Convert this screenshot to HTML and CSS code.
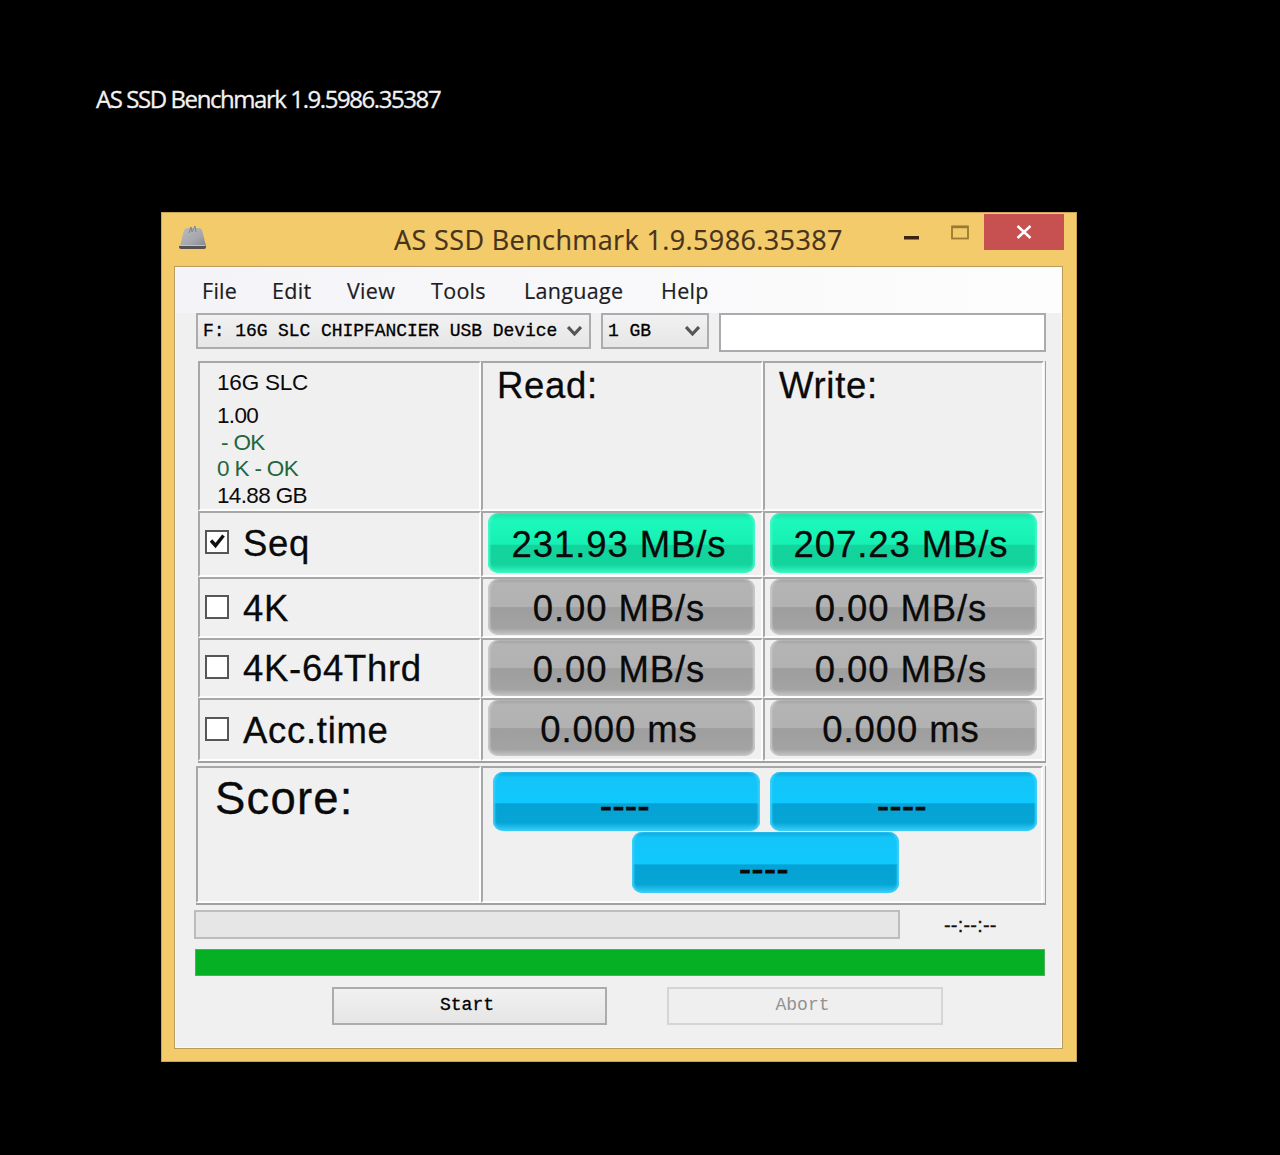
FILE: index.html
```html
<!DOCTYPE html>
<html lang="en">
<head>
<meta charset="utf-8">
<title>AS SSD Benchmark 1.9.5986.35387</title>
<link rel="stylesheet" href="styles.css">
</head>
<body>
<h1 class="caption">AS SSD Benchmark 1.9.5986.35387</h1>
<main class="window">
  <header class="titlebar">
    <svg class="app-icon" width="30" height="28" viewBox="0 0 30 28">
      <defs><linearGradient id="metal" x1="0" y1="0" x2="1" y2="1"><stop offset="0" stop-color="#b9bcc2"/><stop offset=".6" stop-color="#a6a7ad"/><stop offset="1" stop-color="#85868c"/></linearGradient></defs>
      <path d="M6 5Q7 3 10 3H20Q23 3 24 5L28 21H2Z" fill="url(#metal)"/>
      <path d="M1 21H28V22Q28 24 26 24H3Q1 24 1 22Z" fill="#55534f"/>
      <path d="M2 20.500H27" stroke="#c0c1c5" stroke-width="1"/>
      <path d="M11 8L13 2L14 7L17 1L18 7" fill="none" stroke="#85847f" stroke-width="1"/>
    </svg>
    <div class="window-title">AS SSD Benchmark 1.9.5986.35387</div>
    <div class="controls">
      <svg class="min" width="16" height="4"><rect width="15" height="3.500" fill="#3c2410"/></svg>
      <svg class="max" width="19" height="15" viewBox="0 0 19 15"><rect x="1" y="1.500" width="16" height="12" fill="none" stroke="#9b7a33" stroke-width="1.800"/><path d="M1 2H17" stroke="#9b7a33" stroke-width="2.500"/></svg>
      <div class="close"><svg width="16" height="14" viewBox="0 0 16 14"><path d="M1.500 1L14.500 13M14.500 1L1.500 13" stroke="#fff" stroke-width="2.500"/></svg></div>
    </div>
  </header>
  <section class="client">
    <nav class="menu"><span>File</span><span>Edit</span><span>View</span><span>Tools</span><span>Language</span><span>Help</span></nav>
    <div class="toolbar">
      <div class="combo drive"><span>F: 16G SLC CHIPFANCIER USB Device</span><svg width="15" height="11" viewBox="0 0 15 11"><path d="M1 1L7.500 8L14 1" fill="none" stroke="#555" stroke-width="3.200"/></svg></div>
      <div class="combo size"><span>1 GB</span><svg width="15" height="11" viewBox="0 0 15 11"><path d="M1 1L7.500 8L14 1" fill="none" stroke="#555" stroke-width="3.200"/></svg></div>
      <div class="textbox"></div>
    </div>
    <div class="results">
      <div class="cell info"><p class="model">16G SLC</p><p>1.00</p><p class="ok indent">- OK</p><p class="ok">0 K - OK</p><p>14.88 GB</p></div>
      <div class="cell head">Read:</div>
      <div class="cell head">Write:</div>

      <div class="cell test seq"><i class="box"><svg width="19" height="19" viewBox="0 0 19 19"><path d="M3 8.500L7.500 13.500L15.500 3.500" fill="none" stroke="#111" stroke-width="3.400"/></svg></i>Seq</div>
      <div class="cell"><div class="pill green">231.93 MB/s</div></div>
      <div class="cell"><div class="pill green">207.23 MB/s</div></div>

      <div class="cell test"><i class="box"></i>4K</div>
      <div class="cell"><div class="pill">0.00 MB/s</div></div>
      <div class="cell"><div class="pill">0.00 MB/s</div></div>

      <div class="cell test"><i class="box"></i>4K-64Thrd</div>
      <div class="cell"><div class="pill">0.00 MB/s</div></div>
      <div class="cell"><div class="pill">0.00 MB/s</div></div>

      <div class="cell test"><i class="box"></i>Acc.time</div>
      <div class="cell"><div class="pill">0.000 ms</div></div>
      <div class="cell"><div class="pill">0.000 ms</div></div>
    </div>
    <div class="score">
      <div class="cell score-label">Score:</div>
      <div class="cell score-values">
        <div class="pair"><div class="pill blue">----</div><div class="pill blue">----</div></div>
        <div class="pill blue total">----</div>
      </div>
    </div>
    <div class="status"><div class="bar"></div><div class="time">--:--:--</div></div>
    <div class="progress"></div>
    <div class="actions"><div class="button">Start</div><div class="button disabled">Abort</div></div>
  </section>
</main>
</body>
</html>
```
FILE: styles.css
```css
* { box-sizing: border-box; }
body {
  margin: 0;
  height: 1155px;
  overflow: hidden;
  background: #000;
  color: #0a0a0a;
  font-family: "Liberation Sans", Arial, sans-serif;
}
p { margin: 0; }
.caption {
  margin: 0;
  padding: 82px 0 0 96px;
  height: 212px;
  color: #f2f2f2;
  font: 400 24px/34px "Open Sans", "Noto Sans", sans-serif;
  letter-spacing: -1.43px;
  white-space: nowrap;
  -webkit-text-stroke: .3px #f2f2f2;
}
.window {
  width: 916px;
  height: 850px;
  margin-left: 161px;
  padding: 0 13px 13px 12px;
  background: #f3cb6b;
  border: 1px solid #c9a457;
}
.titlebar {
  display: flex;
  height: 53px;
  align-items: flex-start;
}
.app-icon { margin: 12px 0 0 4px; flex: none; }
.window-title {
  flex: none;
  width: 500px;
  margin: 9px 0 0 186px;
  color: #47331a;
  font: 27px/36px "Open Sans", "Noto Sans", sans-serif;
  letter-spacing: .38px;
  white-space: nowrap;
  -webkit-text-stroke: .2px #47331a;
}
.controls { display: flex; align-items: flex-start; }
.min { margin: 23px 0 0 10px; }
.max { margin: 12px 0 0 31px; }
.close {
  display: flex;
  align-items: center;
  justify-content: center;
  width: 80px;
  height: 36px;
  margin: 1px 0 0 14px;
  background: #c75050;
}
.client {
  height: 783px;
  padding: 0 0 0 20px;
  background: #f0f0f0;
  border: 1px solid #b99b5c;
  box-shadow: inset 0 0 0 1px #fafafa;
}
.menu {
  display: grid;
  grid-template-columns: 70px 75px 84px 93px 137px 1fr;
  height: 45px;
  margin: 1px 1px 0 -19px;
  padding-left: 26px;
  background: linear-gradient(90deg, #f4f4f8, #fdfdfd);
  color: #1c1c24;
  font: 21.500px/45px "Open Sans", "Noto Sans", sans-serif;
  letter-spacing: .3px;
  -webkit-text-stroke: .2px #1c1c24;
}
.toolbar { display: flex; align-items: flex-start; height: 48px; }
.combo {
  display: flex;
  align-items: center;
  justify-content: space-between;
  height: 36px;
  padding: 0 7px 0 5px;
  border: 2px solid #acacac;
  background: linear-gradient(#f1f1f1, #e6e6e6);
  font: 18px/30px "Liberation Mono", monospace;
  letter-spacing: -.07px;
  white-space: pre;
  color: #000;
  -webkit-text-stroke: .3px #000;
}
.drive { width: 395px; margin-left: 1px; }
.size { width: 108px; margin-left: 10px; }
.textbox { width: 327px; height: 39px; margin-left: 10px; background: #fff; border: 2px solid #a9abae; }
.results {
  display: grid;
  grid-template-columns: 283px 282px 281px;
  grid-template-rows: 150px 66px 61px 60px 63px;
  width: 848px;
  height: 402px;
  margin-left: 3px;
  border-right: 1.500px solid #a0a0a0;
  border-bottom: 2px solid #a0a0a0;
}
.cell {
  border: 2px solid #fdfdfd;
  border-top-color: #a7a7a7;
  border-left-color: #a7a7a7;
  min-width: 0;
}
.info { padding: 7px 0 0 17px; font-size: 22.500px; line-height: 26.700px; letter-spacing: -.65px; white-space: pre; }
.model { height: 33px; letter-spacing: -.2px; }
.ok { color: #24663c; }
.indent { padding-left: 4px; }
.head { padding: 2px 0 0 14px; font-size: 36.500px; line-height: 42px; letter-spacing: .7px; -webkit-text-stroke: .3px #0a0a0a; }
.test { display: flex; align-items: center; padding: 2px 0 0 5px; font-size: 36.500px; letter-spacing: .7px; -webkit-text-stroke: .3px #0a0a0a; }
.seq { padding-bottom: 3px; }
.box { width: 24px; height: 24px; margin: -4px 14px 0 0; border: 2px solid #565656; background: #fff; flex: none; display: grid; place-items: center; }
.pill {
  width: 267px;
  height: 56px;
  margin-left: 5px;
  padding-right: 5px;
  border-radius: 10px;
  background: linear-gradient(#9f9f9f 0, #b4b4b4 8%, #b2b2b2 50%, #9e9e9e 51%, #a3a3a3 88%, #c5c5c5);
  box-shadow: inset 2px 0 2px #c9c9c9, inset -2px 0 2px #c9c9c9;
  font-size: 36.500px;
  line-height: 59px;
  letter-spacing: .9px;
  text-align: center;
  -webkit-text-stroke: .3px #0a0a0a;
}
.green {
  height: 60px;
  line-height: 63px;
  background: linear-gradient(#20dda3 0, #1df8bc 12%, #16f0b2 52%, #14d39d 54%, #12d49c 86%, #3af9c5);
  box-shadow: inset 2px 0 2px #45f7c8, inset -2px 0 2px #45f7c8;
}
.score {
  display: grid;
  grid-template-columns: 285px 562px;
  width: 850px;
  height: 139px;
  margin: 3px 0 0 1px;
  border-right: 1.500px solid #a0a0a0;
  border-bottom: 2px solid #a0a0a0;
}
.score-label { padding: 4px 0 0 17px; font-size: 45.500px; line-height: 54px; letter-spacing: 1.200px; -webkit-text-stroke: .3px #0a0a0a; }
.score-values { padding: 4px 0 0 5px; }
.score-values .pair { display: flex; gap: 5px; }
.blue {
  height: 59px;
  padding-right: 3px;
  line-height: 67px;
  background: linear-gradient(#0ba4d8 0, #14c4f8 9%, #0fc8fd 52%, #05a3d5 54%, #05a5d6 86%, #3bd0fb);
  box-shadow: inset 2px 0 2px #3dcffb, inset -2px 0 2px #3dcffb;
  font-size: 36px;
  letter-spacing: .5px;
  -webkit-text-stroke: .8px #0a0a0a;
}
.total { height: 61px; line-height: 73px; margin: 1px 0 0 144px; }
.status { display: flex; height: 29px; margin-top: 5px; }
.bar { width: 706px; height: 29px; border: 2px solid #bcbcbc; background: #e6e6e6; margin-left: -1px; }
.time { margin-left: 44px; font-size: 20px; line-height: 30px; letter-spacing: .2px; color: #111; -webkit-text-stroke: .3px #111; }
.progress { width: 850px; height: 27px; margin-top: 10px; background: #06b025; border: 1px solid #4fae5d; }
.actions { display: flex; gap: 60px; margin: 11px 0 0 137px; }
.button {
  width: 275px;
  height: 38px;
  padding-right: 5px;
  border: 2px solid #acacac;
  background: linear-gradient(#f1f1f1, #e5e5e5);
  font: 18px/33px "Liberation Mono", monospace;
  text-align: center;
  -webkit-text-stroke: .3px #000;
  color: #000;
}
.disabled { width: 276px; border-color: #d5d5d5; background: #efefef; color: #929292; -webkit-text-stroke: 0; }
```
